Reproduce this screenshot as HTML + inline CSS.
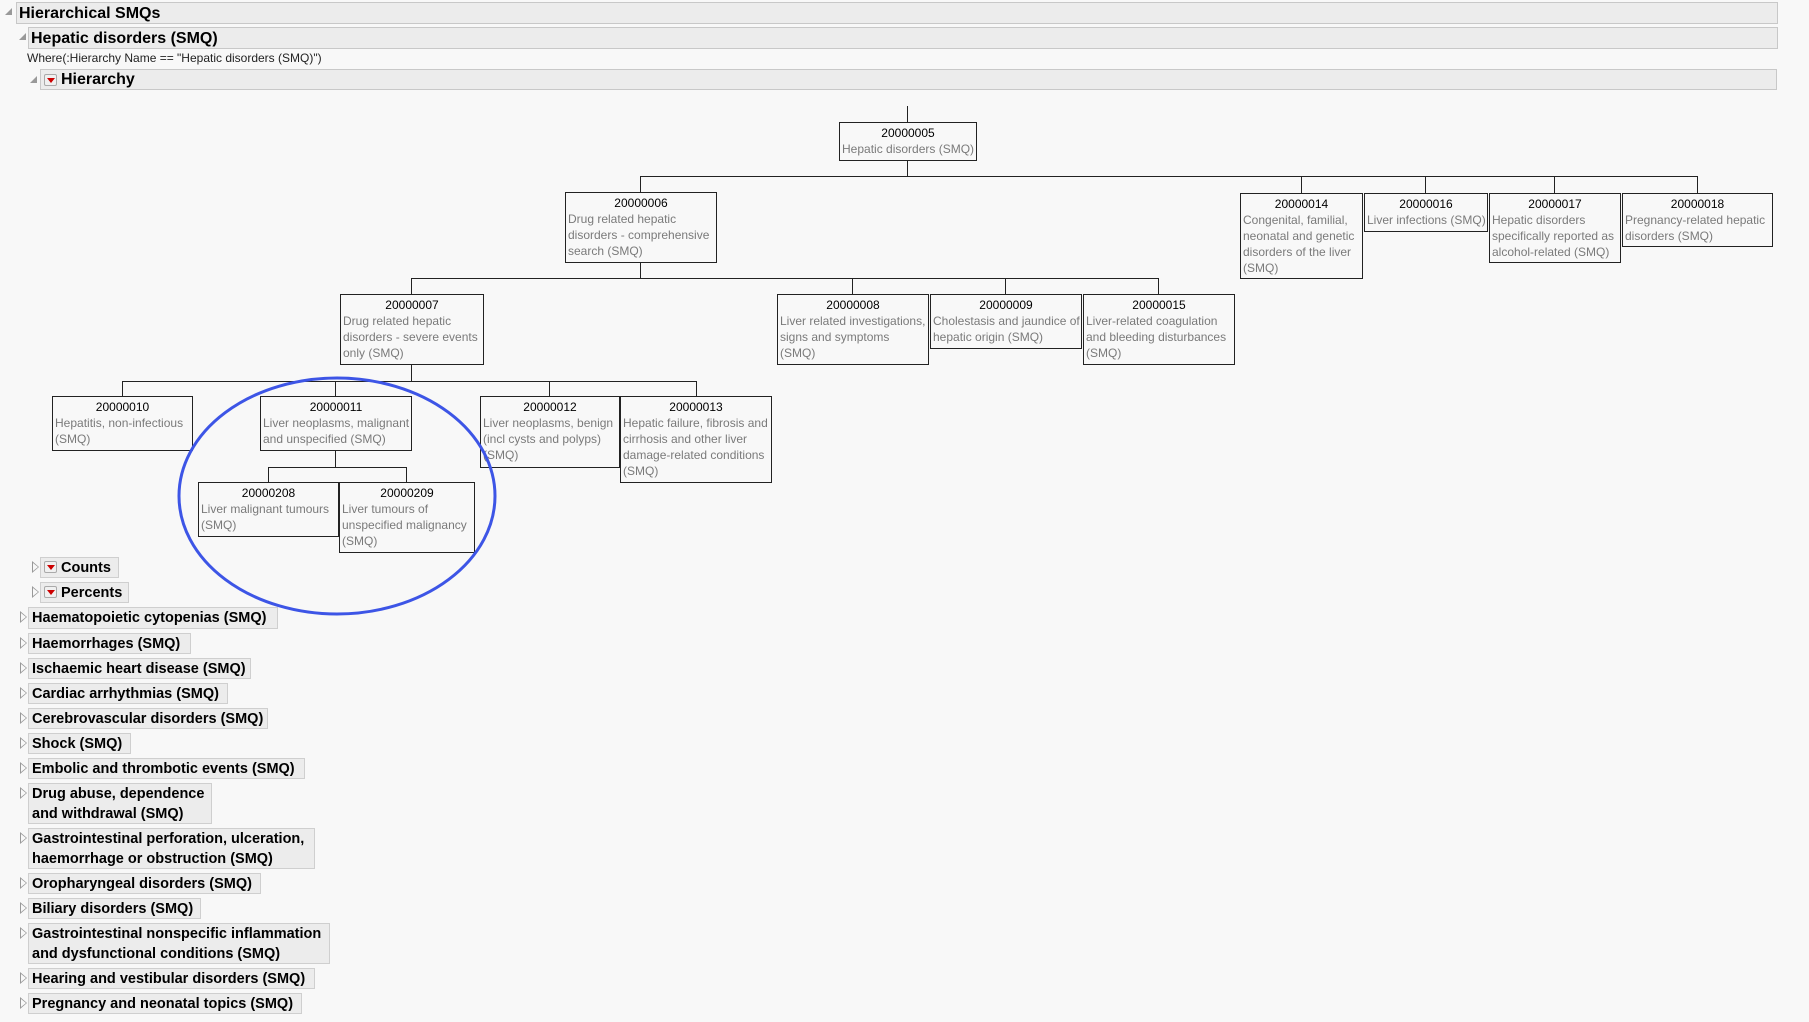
<!DOCTYPE html>
<html><head><meta charset="utf-8">
<style>
html,body{margin:0;padding:0}
body{width:1809px;height:1022px;background:#f8f8f8;position:relative;overflow:hidden;font-family:"Liberation Sans",sans-serif}
.bar{position:absolute;background:#ececec;border:1px solid #c8c8c8;box-sizing:border-box;font-weight:bold;font-size:16px;line-height:19px;color:#000;white-space:nowrap}
.n{position:absolute;border:1px solid #222;background:#f8f8f8;box-sizing:border-box;font-size:12px;line-height:16px;padding:2px 2px 0 2px;color:#7a7a7a;overflow:hidden;white-space:nowrap}
.n b{display:block;font-weight:normal;color:#000;text-align:center}
.h{position:absolute;height:1px;background:#222}
.v{position:absolute;width:1px;background:#222}
.it{position:absolute;left:28px;background:#ececec;border:1px solid #cfcfcf;box-sizing:border-box;font-weight:bold;font-size:14.5px;line-height:20px;padding:0 0 0 3px;white-space:nowrap}
.ar{position:absolute;left:20px;width:0;height:0;border-top:6px solid transparent;border-bottom:6px solid transparent;border-left:7px solid #999}
.ar:after{content:"";position:absolute;left:-6px;top:-4px;border-top:4px solid transparent;border-bottom:4px solid transparent;border-left:5px solid #f8f8f8}
.rb{position:absolute;width:13px;height:12px;border:1px solid #aaa;background:#f0f0f0;box-sizing:border-box;border-radius:2px}
.rb:after{content:"";position:absolute;left:2px;top:3px;border-left:4px solid transparent;border-right:4px solid transparent;border-top:5px solid #c00}
.dn{position:absolute;width:0;height:0;border-left:7px solid transparent;border-bottom:7px solid #999}
</style></head><body>

<div class="dn" style="left:5px;top:8px"></div>
<div class="bar" style="left:16px;top:2px;width:1762px;height:22px;padding:1px 0 0 2px">Hierarchical SMQs</div>
<div class="dn" style="left:19px;top:33px"></div>
<div class="bar" style="left:28px;top:27px;width:1750px;height:22px;padding:1px 0 0 2px">Hepatic disorders (SMQ)</div>
<div style="position:absolute;left:27px;top:51px;font-size:12px;color:#222">Where(:Hierarchy Name == "Hepatic disorders (SMQ)")</div>
<div class="dn" style="left:30px;top:76px"></div>
<div class="bar" style="left:40px;top:69px;width:1737px;height:21px;padding:0 0 0 20px">Hierarchy</div>
<div class="rb" style="left:44px;top:74px"></div>

<div class="v" style="left:907px;top:106px;height:16px"></div>
<div class="v" style="left:907px;top:160px;height:16px"></div>
<div class="h" style="left:640px;top:176px;width:1058px"></div>
<div class="v" style="left:640px;top:176px;height:17px"></div>
<div class="v" style="left:1301px;top:176px;height:17px"></div>
<div class="v" style="left:1425px;top:176px;height:17px"></div>
<div class="v" style="left:1554px;top:176px;height:17px"></div>
<div class="v" style="left:1697px;top:176px;height:17px"></div>

<div class="v" style="left:640px;top:262px;height:16px"></div>
<div class="h" style="left:411px;top:278px;width:748px"></div>
<div class="v" style="left:411px;top:278px;height:16px"></div>
<div class="v" style="left:852px;top:278px;height:16px"></div>
<div class="v" style="left:1005px;top:278px;height:16px"></div>
<div class="v" style="left:1158px;top:278px;height:16px"></div>

<div class="v" style="left:411px;top:364px;height:17px"></div>
<div class="h" style="left:122px;top:381px;width:575px"></div>
<div class="v" style="left:122px;top:381px;height:15px"></div>
<div class="v" style="left:335px;top:381px;height:15px"></div>
<div class="v" style="left:549px;top:381px;height:15px"></div>
<div class="v" style="left:696px;top:381px;height:15px"></div>

<div class="v" style="left:335px;top:450px;height:17px"></div>
<div class="h" style="left:268px;top:467px;width:139px"></div>
<div class="v" style="left:268px;top:467px;height:15px"></div>
<div class="v" style="left:406px;top:467px;height:15px"></div>

<div class="n" style="left:839px;top:122px;width:138px;height:39px"><b>20000005</b>Hepatic disorders (SMQ)</div>
<div class="n" style="left:565px;top:192px;width:152px;height:71px"><b>20000006</b>Drug related hepatic<br>disorders - comprehensive<br>search (SMQ)</div>
<div class="n" style="left:1240px;top:193px;width:123px;height:86px"><b>20000014</b>Congenital, familial,<br>neonatal and genetic<br>disorders of the liver<br>(SMQ)</div>
<div class="n" style="left:1364px;top:193px;width:124px;height:39px"><b>20000016</b>Liver infections (SMQ)</div>
<div class="n" style="left:1489px;top:193px;width:132px;height:70px"><b>20000017</b>Hepatic disorders<br>specifically reported as<br>alcohol-related (SMQ)</div>
<div class="n" style="left:1622px;top:193px;width:151px;height:54px"><b>20000018</b>Pregnancy-related hepatic<br>disorders (SMQ)</div>

<div class="n" style="left:340px;top:294px;width:144px;height:71px"><b>20000007</b>Drug related hepatic<br>disorders - severe events<br>only (SMQ)</div>
<div class="n" style="left:777px;top:294px;width:152px;height:71px"><b>20000008</b>Liver related investigations,<br>signs and symptoms<br>(SMQ)</div>
<div class="n" style="left:930px;top:294px;width:152px;height:55px"><b>20000009</b>Cholestasis and jaundice of<br>hepatic origin (SMQ)</div>
<div class="n" style="left:1083px;top:294px;width:152px;height:71px"><b>20000015</b>Liver-related coagulation<br>and bleeding disturbances<br>(SMQ)</div>

<div class="n" style="left:52px;top:396px;width:141px;height:55px"><b>20000010</b>Hepatitis, non-infectious<br>(SMQ)</div>
<div class="n" style="left:260px;top:396px;width:152px;height:55px"><b>20000011</b>Liver neoplasms, malignant<br>and unspecified (SMQ)</div>
<div class="n" style="left:480px;top:396px;width:140px;height:72px"><b>20000012</b>Liver neoplasms, benign<br>(incl cysts and polyps)<br>(SMQ)</div>
<div class="n" style="left:620px;top:396px;width:152px;height:87px"><b>20000013</b>Hepatic failure, fibrosis and<br>cirrhosis and other liver<br>damage-related conditions<br>(SMQ)</div>
<div class="n" style="left:198px;top:482px;width:141px;height:55px"><b>20000208</b>Liver malignant tumours<br>(SMQ)</div>
<div class="n" style="left:339px;top:482px;width:136px;height:71px"><b>20000209</b>Liver tumours of<br>unspecified malignancy<br>(SMQ)</div>

<svg style="position:absolute;left:0;top:0" width="1809" height="1022"><ellipse cx="337" cy="496" rx="158" ry="118" fill="none" stroke="#3d55e6" stroke-width="3"/></svg>

<div class="ar" style="left:32px;top:561px"></div>
<div class="it" style="left:40px;top:557px;width:79px;height:21px;padding-left:20px">Counts</div>
<div class="rb" style="left:44px;top:561px"></div>
<div class="ar" style="left:32px;top:586px"></div>
<div class="it" style="left:40px;top:582px;width:89px;height:21px;padding-left:20px">Percents</div>
<div class="rb" style="left:44px;top:586px"></div>

<div class="ar" style="top:611px"></div><div class="it" style="top:607px;width:250px;height:22px">Haematopoietic cytopenias (SMQ)</div>
<div class="ar" style="top:637px"></div><div class="it" style="top:633px;width:163px;height:21px">Haemorrhages (SMQ)</div>
<div class="ar" style="top:662px"></div><div class="it" style="top:658px;width:223px;height:21px">Ischaemic heart disease (SMQ)</div>
<div class="ar" style="top:687px"></div><div class="it" style="top:683px;width:200px;height:21px">Cardiac arrhythmias (SMQ)</div>
<div class="ar" style="top:712px"></div><div class="it" style="top:708px;width:240px;height:21px">Cerebrovascular disorders (SMQ)</div>
<div class="ar" style="top:737px"></div><div class="it" style="top:733px;width:103px;height:21px">Shock (SMQ)</div>
<div class="ar" style="top:762px"></div><div class="it" style="top:758px;width:277px;height:21px">Embolic and thrombotic events (SMQ)</div>
<div class="ar" style="top:787px"></div><div class="it" style="top:783px;width:184px;height:41px">Drug abuse, dependence<br>and withdrawal (SMQ)</div>
<div class="ar" style="top:832px"></div><div class="it" style="top:828px;width:287px;height:41px">Gastrointestinal perforation, ulceration,<br>haemorrhage or obstruction (SMQ)</div>
<div class="ar" style="top:877px"></div><div class="it" style="top:873px;width:233px;height:21px">Oropharyngeal disorders (SMQ)</div>
<div class="ar" style="top:902px"></div><div class="it" style="top:898px;width:173px;height:21px">Biliary disorders (SMQ)</div>
<div class="ar" style="top:927px"></div><div class="it" style="top:923px;width:302px;height:41px">Gastrointestinal nonspecific inflammation<br>and dysfunctional conditions (SMQ)</div>
<div class="ar" style="top:972px"></div><div class="it" style="top:968px;width:287px;height:21px">Hearing and vestibular disorders (SMQ)</div>
<div class="ar" style="top:997px"></div><div class="it" style="top:993px;width:274px;height:21px">Pregnancy and neonatal topics (SMQ)</div>
</body></html>
